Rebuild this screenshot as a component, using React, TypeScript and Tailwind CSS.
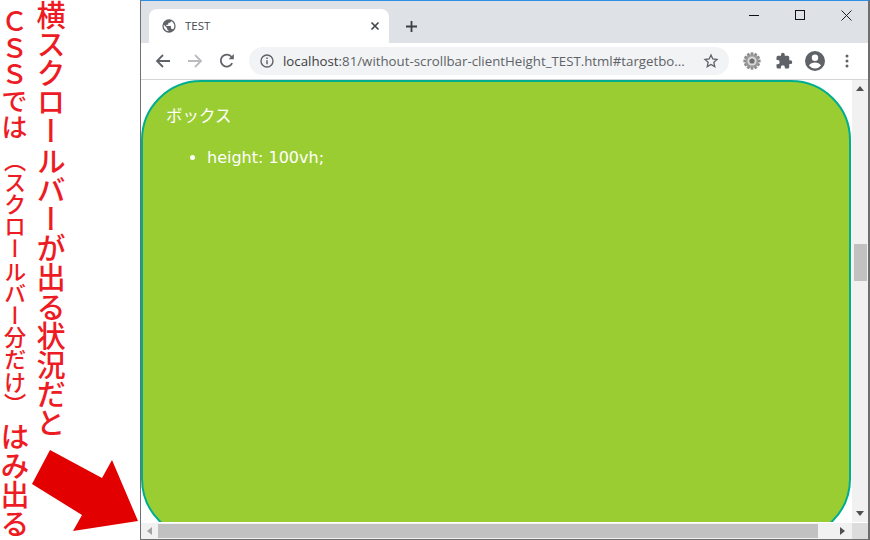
import React from "react";

const cjk = { fontFamily: '"Noto Sans CJK JP", sans-serif' };
const ui = { fontFamily: '"Open Sans", sans-serif' };

function Globe() {
  return (
    <svg width="16" height="16" viewBox="0 0 24 24" fill="#5f6368">
      <path d="M12 2a10 10 0 1 0 0 20 10 10 0 0 0 0-20zm-1 17.9A8 8 0 0 1 4.2 10.2L9 15v1a2 2 0 0 0 2 2v1.900zm6.900-2.500A2 2 0 0 0 16 16h-1v-3a1 1 0 0 0-1-1H8v-2h2a1 1 0 0 0 1-1V7h2a2 2 0 0 0 2-2v-.4a8 8 0 0 1 2.900 12.800z" />
    </svg>
  );
}

function Gear() {
  const teeth = Array.from({ length: 12 }, (_, i) => i * 30);
  return (
    <svg width="18" height="18" viewBox="0 0 18 18">
      {teeth.map((a) => (
        <rect key={a} x="7.6" y="0.4" width="2.8" height="4" fill="#8a8a8a" transform={`rotate(${a} 9 9)`} />
      ))}
      <circle cx="9" cy="9" r="6.6" fill="#9a9a9a" />
      <circle cx="9" cy="9" r="4.6" fill="#d8d8d8" />
      <circle cx="9" cy="9" r="2.6" fill="#6f6f6f" />
    </svg>
  );
}

export default function App() {
  return (
    <div className="flex w-[870px] h-[540px] overflow-hidden bg-white" style={cjk}>
      <div className="relative w-[140px] shrink-0 flex flex-row-reverse justify-end pl-[1px] pr-[75px] gap-[9px] text-[#ed1c24]">
        <div className="[writing-mode:vertical-rl] text-[29.200px] leading-[30px] font-medium whitespace-nowrap h-[440px] w-[30px]">
          横スクロールバーが出る状況だと
        </div>
        <div className="[writing-mode:vertical-rl] leading-[26px] font-medium whitespace-nowrap mt-[8px] w-[26px] flex items-start h-[532px]">
          <span className="text-[26.500px]">ＣＳＳでは</span>
          <span className="text-[22.200px] mt-[8px] -mr-[1px]">（スクロールバー分だけ）</span>
          <span className="text-[29px] mt-[7px] -mr-[1px]">はみ出る</span>
        </div>
        <svg className="absolute left-0 top-0" width="140" height="540" viewBox="0 0 140 540">
          <polygon points="50,450 102,478 112,460 138,521 73,531 82,515 32,484" fill="#e30000" />
        </svg>
      </div>

      <div className="flex-1 flex flex-col border-l border-l-[#707070] border-t border-t-[#2f8fe8] border-r-2 border-r-[#6e6e6e] border-b border-b-[#6e6e6e] min-w-0">
        <div className="h-[42px] bg-[#dee1e6] flex shrink-0 pl-[8px]">
          <div className="mt-[8px] w-[240px] h-[34px] bg-white rounded-t-[8px] flex items-center pl-[12px] pr-[9px]">
            <Globe />
            <span className="ml-[8px] text-[11.500px] text-[#45494e]" style={ui}>TEST</span>
            <svg className="ml-auto" width="10" height="10" viewBox="0 0 10 10" stroke="#45494e" strokeWidth="1.7">
              <path d="M1.5 1.5l7 7M8.5 1.5l-7 7" />
            </svg>
          </div>
          <svg className="mt-[19px] ml-[16px]" width="13" height="13" viewBox="0 0 13 13" stroke="#3c4043" strokeWidth="1.8">
            <path d="M6.5 1v11M1 6.5h11" />
          </svg>
          <div className="ml-auto flex items-start">
            <svg className="mt-[9px] mr-[35px]" width="11" height="11" viewBox="0 0 11 11" stroke="#111" strokeWidth="1"><path d="M0 5.500h10" /></svg>
            <svg className="mt-[9px] mr-[35px]" width="11" height="11" viewBox="0 0 11 11" stroke="#111" strokeWidth="1" fill="none"><rect x="0.500" y="0.500" width="9" height="9" /></svg>
            <svg className="mt-[9px] mr-[16px]" width="11" height="11" viewBox="0 0 11 11" stroke="#222" strokeWidth="1"><path d="M.5 .5l10 10M10.5 .5l-10 10" /></svg>
          </div>
        </div>

        <div className="h-[37px] bg-white border-b border-b-[#d3d5d9] flex items-center shrink-0 pl-[14px]">
          <svg width="16" height="16" viewBox="0 0 16 16" stroke="#5f6368" strokeWidth="1.8" fill="none">
            <path d="M15 8H2M8 2L2 8l6 6" />
          </svg>
          <svg className="ml-[16px]" width="16" height="16" viewBox="0 0 16 16" stroke="#b9bbbe" strokeWidth="1.8" fill="none">
            <path d="M1 8h13M8 2l6 6-6 6" />
          </svg>
          <svg className="ml-[16px]" width="16" height="16" viewBox="0 0 16 16" fill="none">
            <path d="M13.2 10.2A6 6 0 1 1 12.6 4" stroke="#5f6368" strokeWidth="1.8" />
            <path d="M9.6 6.2h5.2V1z" fill="#5f6368" />
          </svg>
          <div className="ml-[14px] w-[480px] h-[28px] rounded-full bg-[#f1f3f4] flex items-center pl-[11px] pr-[10px]">
            <svg width="14" height="14" viewBox="0 0 14 14" fill="none">
              <circle cx="7" cy="7" r="6" stroke="#5f6368" strokeWidth="1.4" />
              <path d="M7 6.2v4" stroke="#5f6368" strokeWidth="1.5" />
              <path d="M7 3.4v1.6" stroke="#5f6368" strokeWidth="1.5" />
            </svg>
            <span className="ml-[9px] pt-[1px] text-[13.270px] whitespace-nowrap text-[#3c4043] w-[404px]" style={ui}>
              localhost<span className="text-[#5f6368]">:81/without-scrollbar-clientHeight_TEST.html#targetbo...</span>
            </span>
            <svg className="ml-auto shrink-0" width="16" height="16" viewBox="0 0 24 24" fill="none" stroke="#5f6368" strokeWidth="2">
              <path d="M12 3l2.700 6 6.300.7-4.700 4.300 1.300 6.400L12 17.200l-5.600 3.200L7.700 14 3 9.700 9.300 9z" />
            </svg>
          </div>
          <div className="ml-[14px]"><Gear /></div>
          <svg className="ml-[14px]" width="18" height="18" viewBox="0 0 24 24" fill="#5f6368">
            <path d="M20.500 11H19V7a2 2 0 0 0-2-2h-4V3.500a2.500 2.500 0 0 0-5 0V5H4a2 2 0 0 0-2 2v3.800h1.500a2.700 2.700 0 0 1 0 5.400H2V20a2 2 0 0 0 2 2h3.800v-1.500a2.700 2.700 0 0 1 5.400 0V22H17a2 2 0 0 0 2-2v-4h1.500a2.500 2.500 0 0 0 0-5z" />
          </svg>
          <svg className="ml-[12px]" width="20" height="20" viewBox="0 0 20 20" fill="#5f6368">
            <path fillRule="evenodd" d="M10 0a10 10 0 1 0 0 20 10 10 0 0 0 0-20zm0 3.500a3.200 3.200 0 1 1 0 6.400 3.200 3.200 0 0 1 0-6.400zM10 17.500a7.700 7.700 0 0 1-6-2.900c1-1.900 3.700-3 6-3s5 1.100 6 3a7.700 7.700 0 0 1-6 2.900z" />
          </svg>
          <svg className="ml-[20px]" width="4" height="14" viewBox="0 0 4 14" fill="#5f6368">
            <circle cx="2" cy="2" r="1.500" /><circle cx="2" cy="7" r="1.500" /><circle cx="2" cy="12" r="1.500" />
          </svg>
        </div>

        <div className="flex-1 flex flex-col min-h-0">
          <div className="flex-1 flex min-h-0 overflow-hidden">
            <div className="flex-1 h-[459px] shrink-0 rounded-[60px] bg-[#9acd32] border-2 border-[#00ae8f] px-[23px] pt-[20px] text-white text-[16px]" style={{ fontFamily: '"DejaVu Sans", "Noto Sans CJK JP", sans-serif' }}>
              <p className="leading-[26px] text-[16.500px]" style={cjk}>ボックス</p>
              <ul className="list-disc pl-[41px] mt-[18px] leading-[24px]">
                <li>height: 100vh;</li>
              </ul>
            </div>
            <div className="w-[16px] ml-px bg-[#f1f1f1] flex flex-col items-center shrink-0">
              <svg className="mt-[6px]" width="8" height="5" viewBox="0 0 8 5" fill="#505050"><path d="M4 0l4 5H0z" /></svg>
              <div className="mt-[153px] w-[13px] h-[37px] bg-[#c1c1c1]"></div>
              <svg className="mt-auto mb-[6px]" width="8" height="5" viewBox="0 0 8 5" fill="#505050"><path d="M4 5l4-5H0z" /></svg>
            </div>
          </div>
          <div className="h-[16px] flex shrink-0 bg-[#f1f1f1] border-t border-t-white box-content">
            <div className="w-[16px] flex items-center justify-center">
              <svg width="5" height="8" viewBox="0 0 5 8" fill="#a3a3a3"><path d="M0 4l5-4v8z" /></svg>
            </div>
            <div className="ml-px flex-1 h-[14px] mt-px bg-[#c1c1c1]"></div>
            <div className="w-[34px] flex items-center justify-end pr-[7px]">
              <svg width="5" height="8" viewBox="0 0 5 8" fill="#505050"><path d="M5 4L0 0v8z" /></svg>
            </div>
            <div className="w-[16px] bg-[#dcdcdc]"></div>
          </div>
        </div>
      </div>
    </div>
  );
}
